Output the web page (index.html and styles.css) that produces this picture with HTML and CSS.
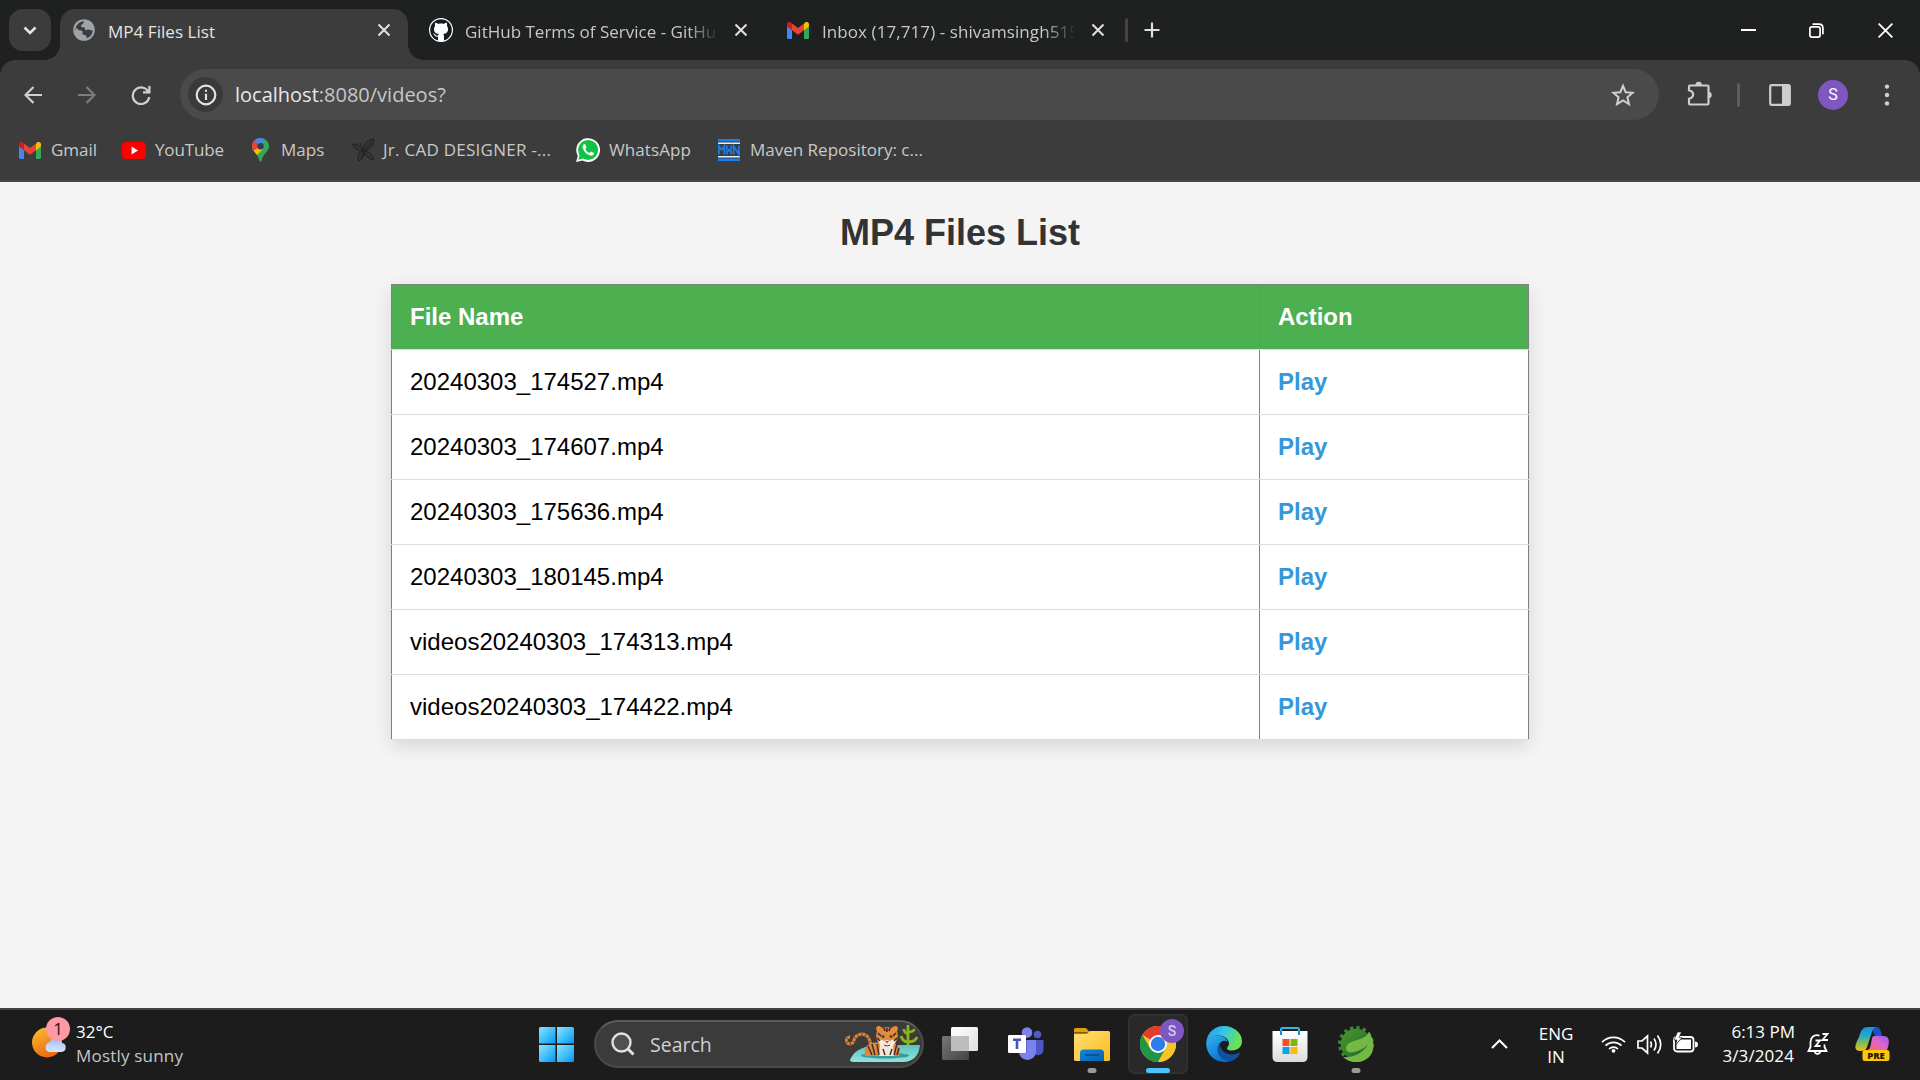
FILE: index.html
```html
<!DOCTYPE html>
<html lang="en">
<head>
<meta charset="utf-8">
<title>MP4 Files List</title>
<link rel="stylesheet" href="styles.css">
</head>
<body>
<svg width="0" height="0" class="defs">
  <defs>
    <linearGradient id="win" x1="0" y1="0" x2="1" y2="1"><stop offset="0" stop-color="#8be3ff"/><stop offset=".5" stop-color="#43c3fb"/><stop offset="1" stop-color="#0892f5"/></linearGradient>
    <linearGradient id="sun" x1="0" y1="0" x2=".5" y2="1"><stop offset="0" stop-color="#f7c031"/><stop offset="1" stop-color="#f0690f"/></linearGradient>
    <linearGradient id="cloud" x1="0" y1="0" x2="0" y2="1"><stop offset="0" stop-color="#9dbef6"/><stop offset="1" stop-color="#d8e7ff"/></linearGradient>
    <linearGradient id="folder" x1="0" y1="0" x2="1" y2="1"><stop offset="0" stop-color="#ffdf78"/><stop offset="1" stop-color="#fcba1c"/></linearGradient>
    <linearGradient id="tray" x1="0" y1="0" x2="1" y2="1"><stop offset="0" stop-color="#0f86dc"/><stop offset="1" stop-color="#0a62ad"/></linearGradient>
    <linearGradient id="edgeTop" x1="0" y1="0" x2="1" y2=".4"><stop offset="0" stop-color="#2199e4"/><stop offset=".5" stop-color="#35c6e8"/><stop offset="1" stop-color="#6be254"/></linearGradient>
    <linearGradient id="edgeLow" x1="0" y1="0" x2=".6" y2="1"><stop offset="0" stop-color="#35b3ee"/><stop offset="1" stop-color="#0a6fd0"/></linearGradient>
    <linearGradient id="bag" x1="0" y1="0" x2="0" y2="1"><stop offset="0" stop-color="#fff"/><stop offset="1" stop-color="#dcdcdc"/></linearGradient>
    <linearGradient id="viewBack" x1="0" y1="0" x2="1" y2="1"><stop offset="0" stop-color="#777"/><stop offset="1" stop-color="#444"/></linearGradient>
    <linearGradient id="viewFront" x1="0" y1="0" x2="1" y2="1"><stop offset="0" stop-color="#fff"/><stop offset="1" stop-color="#e0e0e0"/></linearGradient>
    <linearGradient id="copA" x1="0" y1="0" x2="0" y2="1"><stop offset="0" stop-color="#1a8fe8"/><stop offset=".35" stop-color="#24a8c8"/><stop offset=".7" stop-color="#8cc04a"/><stop offset="1" stop-color="#f2c020"/></linearGradient>
    <linearGradient id="copB" x1="1" y1="0" x2="0" y2="1"><stop offset="0" stop-color="#9b5cf5"/><stop offset=".5" stop-color="#e066c8"/><stop offset="1" stop-color="#ff6a5a"/></linearGradient>
    <linearGradient id="water" x1="0" y1="0" x2="0" y2="1"><stop offset="0" stop-color="#5cc3bd"/><stop offset="1" stop-color="#8fe6da"/></linearGradient>
    <linearGradient id="gear" x1="0" y1="0" x2="1" y2="1"><stop offset="0" stop-color="#4e9a2c"/><stop offset="1" stop-color="#14622a"/></linearGradient>
    <symbol id="gmail" viewBox="0 0 22 17">
      <path d="M0 4v11.4C0 16.300.7 17 1.600 17H5V7z" fill="#4285f4"/>
      <path d="M22 4v11.400c0 .9-.7 1.600-1.600 1.600H17V7z" fill="#34a853"/>
      <path d="M17 2v6.200l5-3.800V2.400C22 .2 19.600-.8 17.900.600z" fill="#fbbc04"/>
      <path d="M5 8.200V1.400l6 4.600 6-4.600v6.800l-6 4.600z" fill="#ea4335"/>
      <path d="M0 2.400v2l5 3.800V1.400L4.100.600C2.400-.8 0 .2 0 2.400z" fill="#c5221f"/>
    </symbol>
    <symbol id="cross" viewBox="0 0 14 14"><path d="M1.500 1.500l11 11M12.500 1.500l-11 11" stroke="currentColor" stroke-width="2.100"/></symbol>
  </defs>
</svg>

<header class="browser">
  <div class="tabstrip">
    <button class="tab-search"><svg width="14" height="9" viewBox="0 0 14 9"><path d="M1.500 1.500L7 7l5.500-5.500" fill="none" stroke="#e4e4e4" stroke-width="2.600"/></svg></button>
    <div class="tab active">
      <span class="favicon"><svg width="22" height="22" viewBox="0 0 22 22"><circle cx="11" cy="11" r="10.800" fill="#9da3ab"/><path d="M11.200 2.200c-1 1.300-.6 2.400-1.900 3-1.200.5-1.500 1.600-1 2.500.7 1 2.200.2 3 .9.900.9.300 2.400 1.700 2.700 1.200.3 1.300-1.300 2.600-.9 1.300.5 2.500 1.500 3.900.600.3 3.500-2.200 7.300-5.800 8.300.2-1.700-.4-3.300-2.100-3.300-1.700-.1-2.500-1.100-2.100-2.600.3-1.200-.5-1.900-1.700-2L2.300 11c.2-4.800 4-8.700 8.900-8.800z" fill="#3c3c3c"/><path d="M13 3c2.800.6 5 2.400 6 5-1.400.3-2.700-.5-3.200-1.400C15.200 5.300 13.500 5 13 3zM3 8.600l4.600 4.700c1.200.2 1.600 1 1.400 2-.3 1.400.6 2.200 1.900 2.300l.2 2.200C6 19.500 1.500 14 3 8.600z" fill="#9da3ab"/></svg></span>
      <span class="tab-title t1">MP4 Files List</span>
      <svg class="tab-close" width="14" height="14"><use href="#cross"/></svg>
    </div>
    <div class="tab">
      <span class="favicon"><svg width="24" height="24" viewBox="0 0 24 24"><circle cx="12" cy="12" r="11.400" fill="#161b22" stroke="#fff" stroke-width="1.200"/><path d="M9 23v-4.300c-2.500.4-3.300-.8-3.800-1.900-.3-.6-.9-1-1.300-1.300 1.200-.3 2 .4 2.600 1.300.6.900 1.400 1.200 2.500.8.100-.7.400-1.300.8-1.600-3-.4-4.800-1.600-4.800-5 0-1.300.4-2.300 1.100-3.100-.3-1-.3-2.200.1-3.200 1.100 0 2.200.6 3.100 1.200 1.700-.4 3.700-.4 5.400 0 .9-.6 2-1.200 3.100-1.200.4 1 .4 2.200.1 3.200.7.800 1.100 1.800 1.100 3.100 0 3.400-1.800 4.600-4.800 5 .6.500.8 1.300.8 2.400V23c-2 .9-4 .9-6 0z" fill="#fff"/></svg></span>
      <span class="tab-title t2">GitHub Terms of Service - GitHub</span>
      <svg class="tab-close" width="14" height="14"><use href="#cross"/></svg>
    </div>
    <div class="tab">
      <span class="favicon"><svg width="22" height="17"><use href="#gmail"/></svg></span>
      <span class="tab-title t3">Inbox (17,717) - shivamsingh515</span>
      <svg class="tab-close" width="14" height="14"><use href="#cross"/></svg>
    </div>
    <i class="tab-divider"></i>
    <svg class="new-tab" width="16" height="16" viewBox="0 0 16 16"><path d="M8 .5v15M.5 8h15" stroke="#dedede" stroke-width="2.200"/></svg>
    <div class="window-controls">
      <span><svg width="15" height="15" viewBox="0 0 15 15"><path d="M0 7h15" stroke="#fff" stroke-width="2"/></svg></span>
      <span><svg width="15" height="15" viewBox="0 0 15 15" fill="none" stroke="#fff" stroke-width="1.700"><rect x=".9" y="3.900" width="10.200" height="10.200" rx="2"/><path d="M3.500 1.200H10c2.500 0 3.900 1.500 3.900 3.900v6.200"/></svg></span>
      <span><svg width="15" height="15" viewBox="0 0 15 15"><path d="M.6.6l13.800 13.800M14.400.6L.6 14.400" stroke="#fff" stroke-width="1.800"/></svg></span>
    </div>
  </div>

  <div class="toolbar">
    <span class="nav"><svg width="18" height="18" viewBox="0 0 18 18" fill="none" stroke="#d0d0d0" stroke-width="2.200"><path d="M18 9H2M9.500 1L1.500 9l8 8"/></svg></span>
    <span class="nav"><svg width="18" height="18" viewBox="0 0 18 18" fill="none" stroke="#7d7d7d" stroke-width="2.200"><path d="M0 9h16M8.500 1l8 8-8 8"/></svg></span>
    <span class="nav"><svg width="20" height="20" viewBox="0 0 20 20" fill="none" stroke="#d0d0d0" stroke-width="2.200"><path d="M17.300 6.600A8.300 8.300 0 1 0 18.300 12M18.400 1v6.400H12"/></svg></span>
    <div class="omnibox">
      <span class="site-info"><svg width="22" height="22" viewBox="0 0 22 22"><circle cx="11" cy="11" r="9.300" fill="none" stroke="#e2e2e2" stroke-width="2.200"/><path d="M11 9.700v6.300M11 5.800v2" stroke="#e2e2e2" stroke-width="2.100"/></svg></span>
      <span class="url"><b>localhost</b>:8080/videos?</span>
      <svg class="star" width="24" height="24" viewBox="0 0 24 24"><path d="M12 2.800l2.700 6.400 6.900.6-5.200 4.500 1.600 6.800-6-3.600-6 3.600 1.600-6.800L2.400 9.800l6.900-.6z" fill="none" stroke="#d0d0d0" stroke-width="2"/></svg>
    </div>
    <svg class="extensions" width="25" height="25" viewBox="0 0 25 25"><path d="M2 4.500h18.500q1 0 1 1v17q0 1-1 1H3q-1 0-1-1v-4.800c5.500-1.500 5.500-7 0-8.500V5.500q0-1 1-1z" fill="none" stroke="#cdcdcd" stroke-width="2.200"/><path d="M8.500 4a3.200 3.200 0 0 1 6.400 0zM21.500 10.800a3.200 3.200 0 0 1 0 6.400z" fill="#cdcdcd"/></svg>
    <i class="tool-divider"></i>
    <svg class="panel" width="22" height="22" viewBox="0 0 22 22"><rect x="1.200" y="1.200" width="19.600" height="19.600" rx="1.500" fill="none" stroke="#cdcdcd" stroke-width="2.200"/><path d="M13 1h8v20h-8z" fill="#cdcdcd"/></svg>
    <span class="avatar">S</span>
    <svg class="more" width="6" height="22" viewBox="0 0 6 22" fill="#d0d0d0"><circle cx="3" cy="2.600" r="2.200"/><circle cx="3" cy="11" r="2.200"/><circle cx="3" cy="19.400" r="2.200"/></svg>
  </div>

  <nav class="bookmarks">
    <a><span class="bm-icon"><svg width="22" height="17"><use href="#gmail"/></svg></span><span>Gmail</span></a>
    <a><span class="bm-icon"><svg width="24" height="17" viewBox="0 0 24 17"><rect width="24" height="17" rx="4" fill="#f00"/><path d="M9.600 4.600v7.800l6.400-3.900z" fill="#fff"/></svg></span><span class="bm-youtube">YouTube</span></a>
    <a><span class="bm-icon"><svg width="17" height="24" viewBox="0 0 17 24"><clipPath id="pin"><path d="M8.500 0C3.700 0 0 3.700 0 8.300c0 5.200 5.800 7.200 7.300 13.900.3 1.900 2.100 1.900 2.400 0C11.200 15.500 17 13.500 17 8.300 17 3.700 13.300 0 8.500 0z"/></clipPath><g clip-path="url(#pin)"><path d="M0 0h17v24H0z" fill="#34a853"/><path d="M0 16L17-3V-5H0z" fill="#4285f4"/><path d="M0 0l2.500 2.500 5 5L0 15z" fill="#ea4335"/><path d="M0 11l7-6 4 6-7 7H0z" fill="#fbbc04"/><path d="M-1 3l3.300-.3L8 8 0 14z" fill="#ea4335"/></g><circle cx="8.500" cy="8.200" r="3.200" fill="#303c50"/></svg></span><span>Maps</span></a>
    <a><span class="bm-icon"><svg width="23" height="24" viewBox="0 0 23 24" fill="#343434" stroke="#222" stroke-width="1"><path d="M11 13C5 13 1.500 10 .8 6c4-.1 8 2 10.200 7zM12 13C11 7 14 2 21.500 1c1 5-3 11-9.500 12zM11 13.500C6 14 5 18 6.500 23c4-1 6-5 4.500-9.500zM12 13.500c1 4 4 7.500 9.500 8-.5-5-4-8-9.500-8z"/><path d="M9 20l10-16M8 5l6 13" fill="none"/></svg></span><span class="bm-cad">Jr. CAD DESIGNER -...</span></a>
    <a><span class="bm-icon"><svg width="24" height="24" viewBox="0 0 24 24"><path d="M0 24l1.800-6A11.900 11.900 0 1 1 6.400 22.500z" fill="#fff"/><circle cx="12.100" cy="11.900" r="10" fill="#12c144"/><path d="M2.300 21.800l1.400-5 3.500 3.700z" fill="#12c144"/><path d="M8.300 6.100c-1.800.8-2.100 2.600-1.300 4.600 1.500 3.500 4 5.900 7.600 6.900 2 .5 3.300-.8 3.400-2.600l-3-1.600-1.600 1.500c-2-.8-3.300-2.200-4.100-4l1.200-1.500-1.200-3z" fill="#fff"/></svg></span><span class="bm-whatsapp">WhatsApp</span></a>
    <a><span class="bm-icon"><svg width="22" height="22" viewBox="0 0 22 22"><path d="M0 1.300h22M0 20.700h22" stroke="#1780f0" stroke-width="2.600"/><path d="M0 4.200h22M0 17.700h22" stroke="#e9f2fb" stroke-width="1.500"/><path d="M1 15.500V7l2.700 4L6.400 7v8.500M8.800 6.500v3l2.200 2 2.200-2v-3M8.800 15.500v-3h1.400M13.200 15.500v-3h-1.400M15.600 15.500V7l5.400 8.500V7" fill="none" stroke="#1780f0" stroke-width="1.700"/></svg></span><span>Maven Repository: c...</span></a>
  </nav>
</header>

<main class="page">
  <h1>MP4 Files List</h1>
  <table>
    <colgroup><col class="col-name"><col></colgroup>
    <thead><tr><th>File Name</th><th>Action</th></tr></thead>
    <tbody>
      <tr><td>20240303_174527.mp4</td><td><a>Play</a></td></tr>
      <tr><td>20240303_174607.mp4</td><td><a>Play</a></td></tr>
      <tr><td>20240303_175636.mp4</td><td><a>Play</a></td></tr>
      <tr><td>20240303_180145.mp4</td><td><a>Play</a></td></tr>
      <tr><td>videos20240303_174313.mp4</td><td><a>Play</a></td></tr>
      <tr><td>videos20240303_174422.mp4</td><td><a>Play</a></td></tr>
    </tbody>
  </table>
</main>

<footer class="taskbar">
  <div class="weather">
    <span class="weather-icon">
      <svg width="36" height="32" viewBox="0 0 36 32"><circle cx="15" cy="15.500" r="15" fill="url(#sun)"/><path d="M17 25h12.500a4.500 4.500 0 0 0 .6-8.900 6.500 6.500 0 0 0-12.300-.8A5 5 0 0 0 17 25z" fill="url(#cloud)"/></svg>
      <b class="weather-badge">1</b>
    </span>
    <span class="weather-text"><span class="temp">32°C</span><span class="sky">Mostly sunny</span></span>
  </div>
  <svg class="start" width="35" height="35" viewBox="0 0 35 35" fill="url(#win)"><path d="M1.500 0H16.500V16.500H0V1.500Q0 0 1.500 0z"/><path d="M18 0h15.500Q35 0 35 1.500V16.500H18z"/><path d="M0 18h16.500v17h-15Q0 35 0 33.500z"/><path d="M18 18h17v15.500q0 1.500-1.500 1.500H18z"/></svg>
  <div class="search">
    <svg width="24" height="24" viewBox="0 0 24 24" fill="none" stroke="#dfe1e6"><circle cx="10.500" cy="10.500" r="9" fill="#505050" stroke-width="2.400"/><path d="M17 17l5.500 5.500" stroke-width="3"/></svg>
    <span>Search</span>
    <svg class="tiger" width="76" height="40" viewBox="0 0 76 40">
      <path d="M5 36C9 25 21 21 38 21h37c-1 10-6 17-18 17H13c-5 0-8 0-8-2z" fill="url(#water)"/>
      <ellipse cx="40" cy="31.500" rx="24" ry="3" fill="#3d99a0"/>
      <path d="M6 20C0 20 0 13 5 13M5 20q4-1 4-4c1-5 8-8 13-4q3 3 4 9" fill="none" stroke="#d9843b" stroke-width="3"/>
      <path d="M6 20C0 20 0 13 5 13M5 20q4-1 4-4c1-5 8-8 13-4q3 3 4 9" fill="none" stroke="#7a4a2c" stroke-width="3" stroke-dasharray="1 3"/>
      <path d="M20 32c-2-9 4-15 14-13h13c7 0 9 6 7 13z" fill="#dc883c"/>
      <path d="M35 20h13l1 12H34z" fill="#f4e6d6"/>
      <path d="M23 22l4 9M27 20l3 11M32 20l2 11M52 20l-3 11M54 24l-2 7M38 25l2 6M47 25l-2 6" stroke="#3c2a2c" stroke-width="1.400"/>
      <path d="M32 7c-3-4 2-7 5-3 3-1 7-1 10 0 3-4 8-1 5 3 2 6 0 12-5 15q-5 3-10 0c-5-3-7-9-5-15z" fill="#e28b3d"/>
      <path d="M33 16q3-1 6 1l3-1 3 1q3-2 6-1c-1 5-5 8-9 8s-8-3-9-8z" fill="#f7ebdf"/>
      <path d="M33 9l3 3M32 14l3 3M51 9l-3 3M52 14l-3 3M42 4v4M39 4l1 3M45 4l-1 3" stroke="#3c2a2c" stroke-width="1.600"/>
      <circle cx="38" cy="12.500" r="1.500" fill="#33502a"/><circle cx="46" cy="12.500" r="1.500" fill="#33502a"/><path d="M40 17h4l-2 2.500z" fill="#a25055"/><path d="M39 21q3 2 6 0" stroke="#51353a" fill="none"/>
      <path d="M63 21V1M63 18c-4 0-6-3-7-6M63 18c5 0 8-2 9-5M63 10c-3-1-4-3-4-5M63 8c4 0 6-1 6-3" fill="none" stroke="#86b81c" stroke-width="2.800"/>
    </svg>
  </div>
  <div class="apps">
    <span class="app"><svg width="36" height="36" viewBox="0 0 36 36"><rect x="0" y="10" width="27" height="24" rx="1.500" fill="url(#viewBack)"/><rect x="9" y="1" width="27" height="24" rx="1.500" fill="url(#viewFront)"/><path d="M9 10h18v15H10.500Q9 25 9 23.500z" fill="#bdbdbd"/></svg></span>
    <span class="app"><svg width="36" height="36" viewBox="0 0 36 36"><circle cx="29.500" cy="8.500" r="3.800" fill="#5059c9"/><path d="M26 14h9.500v9.500a5.500 5.500 0 0 1-9.500 4z" fill="#4e56c4"/><circle cx="19" cy="6.500" r="5.300" fill="#7b83eb"/><path d="M11 14h17v11.500a8.500 8.500 0 0 1-17 0z" fill="#7b83eb"/><path d="M11 14h8v12.500H10.500z" fill="#5d65ce"/><rect x="0" y="9" width="18" height="18" rx="1.200" fill="#fff"/><path d="M5 13.700h8M9 14v9" stroke="#4b53bc" stroke-width="2.600"/></svg></span>
    <span class="app running"><svg width="36" height="36" viewBox="0 0 36 36"><path d="M0 6V3.500Q0 2 1.500 2H12l4 4.500H0z" fill="#e19f0a"/><path d="M0 7.500h13l3-2.500h18.500Q36 5 36 6.500v27q0 1.500-1.500 1.500h-33Q0 35 0 33.500z" fill="url(#folder)"/><path d="M6 35V27q0-3.500 3.500-3.500h17q3.500 0 3.500 3.500v8z" fill="url(#tray)"/><path d="M11 29h14" stroke="#074f91" stroke-width="1.800"/></svg></span>
    <span class="app current"><svg width="36" height="36" viewBox="0 0 36 36"><circle cx="18" cy="18" r="18" fill="#f9c32b"/><path d="M18 18L2.400 9A18 18 0 0 1 33.600 9H18z" fill="#e23c30"/><path d="M2.400 9l7.800 13.500L18 27 18 36A18 18 0 0 1 2.400 9z" fill="#239447"/><path d="M10.200 22.500L18 27l7.800-4.500L18 36A18 18 0 0 1 8 33z" fill="#239447"/><path d="M25.800 22.500L18 36A18 18 0 0 0 33.600 9H18z" fill="#f9c32b"/><circle cx="18" cy="18" r="9" fill="#fff"/><circle cx="18" cy="18" r="7.200" fill="#2f7ded"/></svg><b class="profile-badge">S</b></span>
    <span class="app"><svg width="36" height="36" viewBox="0 0 36 36"><path d="M.3 16C1.500 6 9 0 18 0c10 0 18 7 18 15 0 6-4.500 9.500-10 9.500-4 0-6-1.300-4.500-3.200C26 16 20 9.500 12 9.500 6.500 9.500 2 12 .3 16z" fill="url(#edgeTop)"/><path d="M.3 16C2 11.500 7 9 12 9.500c5 .3 9 3 9.500 6.500-4-3-8.500 0-8.500 6 0 7 5 12 12 13C11 39-.8 29 .3 16z" fill="url(#edgeLow)"/><path d="M14 16.500c-6 7-1 19 10.500 18.700 4-1 7.500-4 9.200-7.300.4-1-.4-1.300-1.200-.8C24 31 13 26.500 14 16.500z" fill="#0d539f"/></svg></span>
    <span class="app"><svg width="36" height="36" viewBox="0 0 36 36"><path d="M9 9V3.500Q9 2 10.500 2h15Q27 2 27 3.500V9" fill="none" stroke="#35b4ee" stroke-width="2"/><path d="M.5 5h35v26q0 5-5 5h-25q-5 0-5-5z" fill="url(#bag)"/><path d="M9 9V5M27 9V5" stroke="#1590d0" stroke-width="2"/><path d="M10.500 13h7v7h-7z" fill="#f25022"/><path d="M18.500 13h7v7h-7z" fill="#7fba00"/><path d="M10.500 21h7v7h-7z" fill="#00a4ef"/><path d="M18.500 21h7v7h-7z" fill="#ffb900"/></svg></span>
    <span class="app running"><svg width="36" height="36" viewBox="0 0 36 36"><circle cx="18" cy="18" r="16" fill="none" stroke="#3d8a2d" stroke-width="4" stroke-dasharray="3.140 3.140"/><circle cx="18" cy="18" r="15.300" fill="url(#gear)"/><path d="M31 6c6 9 6 19-.5 25.500C23 38.500 11 37 5 31c9 1 20-3 25-13-4 5-9 7-14 8-5 1-7 0-8-3C8 12 26 17 31 6z" fill="#74b944"/></svg></span>
  </div>
  <div class="tray">
    <svg class="chevron" width="17" height="10" viewBox="0 0 17 10"><path d="M1 9l7.500-7.500L16 9" fill="none" stroke="#fff" stroke-width="2"/></svg>
    <span class="lang">ENG<br>IN</span>
    <svg class="wifi" width="25" height="18" viewBox="0 0 25 18" fill="none" stroke="#fff" stroke-width="1.700"><path d="M1 7.200a16 16 0 0 1 23 0M4.500 10.700a11.300 11.300 0 0 1 16 0M8 14a6.500 6.500 0 0 1 9 0"/><circle cx="12.500" cy="15.800" r="1.900" fill="#fff" stroke="none"/></svg>
    <svg class="sound" width="25" height="21" viewBox="0 0 25 21" fill="none" stroke="#fff" stroke-width="1.700"><path d="M1 7h4l5.500-5v17L5 14H1zM13.500 7.500q1.800 3 0 6M17 4.500q4 6 0 12M20.500 1.500q6.500 9 0 18"/></svg>
    <svg class="battery" width="25" height="21" viewBox="0 0 25 21"><rect x="1" y="5" width="19.500" height="14.500" rx="3" fill="none" stroke="#fff" stroke-width="1.800"/><path d="M3.500 17V12L8 7.500h10V17z" fill="#fff"/><path d="M22 9.500q3 0 3 3t-3 3z" fill="#fff"/><path d="M4.500 0L1 8h3l-1.500 5L9 5.500H6L8.500 0z" fill="#fff" stroke="#1c1c1c" stroke-width=".6"/></svg>
    <span class="clock"><span class="time">6:13 PM</span><span class="date">3/3/2024</span></span>
    <svg class="bell" width="22" height="23" viewBox="0 0 22 23" fill="none" stroke="#fff" stroke-width="1.800"><path d="M12.500 2.600C7 1 3.500 4.500 3.500 9v5L1.500 18h18l-2-4v-2.500"/><path d="M7.500 19q3 4 6 0"/><path d="M8.500 7.500h4.500l-4.500 5.500h5M15.500 1h5l-5 6h5.500"/></svg>
    <svg class="copilot" width="36" height="36" viewBox="0 0 36 36"><path d="M17 1h5c3 0 4.500 2 5 5l1 4h-7z" fill="#2050c8"/><path d="M5 11C7 4 9 1 14 1h8c-3 1-4 4-5 8l-4 12c-1 3-3 4-6 4C1 25-1 22 5 11z" fill="url(#copA)"/><path d="M20 10h9c7 0 7 6 4 14H13c2 0 3-2 4-6 1-5 1-8 3-8z" fill="url(#copB)"/><rect x="8.500" y="24" width="27" height="11" rx="2.500" fill="#ffc50a"/><text x="22" y="33" text-anchor="middle" class="pre" fill="#241c00">PRE</text></svg>
  </div>
</footer>
</body>
</html>
```
FILE: styles.css
```css
* { box-sizing: border-box; }
body {
  margin: 0;
  width: 1920px;
  height: 1080px;
  overflow: hidden;
  display: flex;
  flex-direction: column;
  background: #f4f4f4;
  font-family: "Liberation Sans", Arial, sans-serif;
}
svg { display: block; flex: none; }
.defs { position: absolute; }

.browser, .taskbar { font-family: "Open Sans", "Noto Sans", sans-serif; }
.browser {
  height: 182px;
  flex: none;
  background: #3c3c3c;
  border-bottom: 2px solid #474747;
}

/* Tab strip */
.tabstrip {
  height: 60px;
  display: flex;
  align-items: center;
  background: #1f2120;
}
.tab-search {
  width: 42px;
  height: 42px;
  margin: 0 9px;
  padding: 0;
  border: 0;
  border-radius: 14px;
  background: #3c3c3c;
  display: grid;
  place-items: center;
}
.tab {
  width: 348px;
  height: 51px;
  margin-right: 9px;
  align-self: flex-end;
  display: flex;
  align-items: center;
  padding: 0 17px 9px 12px;
  color: #c7c7c7;
}
.tab.active {
  background: #3c3c3c;
  border-radius: 15px 15px 0 0;
  color: #e3e3e3;
  position: relative;
}
.tab.active::before, .tab.active::after {
  content: "";
  position: absolute;
  bottom: 0;
  width: 15px;
  height: 15px;
}
.tab.active::before { left: -15px; background: radial-gradient(circle at 0 0, transparent 14.5px, #3c3c3c 15px); }
.tab.active::after { right: -15px; background: radial-gradient(circle at 100% 0, transparent 14.5px, #3c3c3c 15px); }
.favicon { width: 24px; display: grid; place-items: center; }
.tab-title {
  width: 252px;
  margin: 3px 0 0 12px;
  overflow: hidden;
  white-space: nowrap;
  font-size: 17px;
  line-height: 24px;
}
.t1 { letter-spacing: .05px; }
.t2, .t3 { -webkit-mask-image: linear-gradient(90deg, #000 222px, transparent 254px); mask-image: linear-gradient(90deg, #000 222px, transparent 254px); }
.t3 { letter-spacing: .08px; }
.tab-close { margin-left: auto; color: #dedede; }
.tab-divider { width: 3px; height: 24px; margin-left: -6px; border-radius: 2px; background: #444; }
.new-tab { margin-left: 16px; }
.window-controls { margin-left: auto; display: flex; }
.window-controls span { width: 69px; display: grid; place-items: center; }
.window-controls span:first-child { padding-left: 2px; }

/* Address row */
.toolbar {
  height: 69px;
  padding: 0 30px 0 6px;
  display: flex;
  align-items: center;
  background: linear-gradient(#3c3c3c, #3c3c3c) 0 15px no-repeat, radial-gradient(circle at 15px 15px, #3c3c3c 14.5px, #1f2120 15px) 0 0 / 15px 15px no-repeat, radial-gradient(circle at 0 15px, #3c3c3c 14.5px, #1f2120 15px) 100% 0 / 15px 15px no-repeat;
}
.nav { width: 54px; display: grid; place-items: center; }
.omnibox {
  width: 1479px;
  height: 51px;
  margin-left: 12px;
  padding: 0 24px 0 8px;
  border-radius: 26px;
  background: #4a4a4a;
  display: flex;
  align-items: center;
}
.site-info { width: 35px; height: 35px; border-radius: 50%; background: #3a3a3a; display: grid; place-items: center; }
.url { margin-left: 12px; font-size: 20px; line-height: 28px; color: #c7c7c7; }
.url b { font-weight: 400; color: #e8e8e8; }
.star { margin-left: auto; }
.extensions { margin: -3px 0 0 28px; }
.tool-divider { width: 3px; height: 24px; margin-left: 25px; border-radius: 2px; background: #5d5d5d; }
.panel { margin-left: 29px; }
.avatar {
  width: 30px;
  height: 30px;
  margin-left: 27px;
  border-radius: 50%;
  background: #7e57c2;
  color: #fff;
  font: 16px/30px Roboto, sans-serif;
  text-align: center;
}
.more { margin-left: auto; }

.bookmarks {
  height: 42px;
  padding-left: 18px;
  display: grid;
  grid-template-columns: 104px 126px 103px 225px 141px 240px;
  align-items: center;
  color: #c9c9c9;
  font-size: 17px;
}
.bookmarks a { display: flex; align-items: center; gap: 9px; white-space: nowrap; line-height: 24px; }
.bm-icon { width: 24px; display: grid; place-items: center; }
.bm-youtube { letter-spacing: -.15px; }
.bm-cad { margin-left: -1px; letter-spacing: .26px; }
.bm-whatsapp { letter-spacing: .1px; }

/* Page content */
.page { height: 826px; flex: none; }
h1 {
  margin: 30px 0 31px;
  font-size: 36px;
  line-height: 41px;
  text-align: center;
  color: #333;
}
table {
  width: 1138px;
  margin: 0 0 0 391px;
  table-layout: fixed;
  border-collapse: collapse;
  border: 1px solid #808080;
  border-bottom: 0;
  background: #fff;
  box-shadow: 0 6px 18px rgba(0, 0, 0, .12);
  font-size: 24px;
}
.col-name { width: 868px; }
th, td {
  height: 65px;
  padding: 0 18px;
  text-align: left;
  border: 1px solid #808080;
  border-bottom-color: #ddd;
}
tbody td { border-top-color: #ddd; }
th { background: #4caf50; color: #fff; }
td a { color: #3498db; font-weight: 700; }

/* Taskbar */
.taskbar {
  height: 72px;
  flex: none;
  padding-bottom: 2px;
  border-top: 2px solid #424242;
  background: #1c1c1c;
  color: #fff;
  display: flex;
  align-items: center;
  font-size: 17px;
}
.weather { width: 507px; margin-left: 32px; display: flex; }
.weather-icon { width: 44px; height: 48px; padding-top: 7px; position: relative; }
.weather-badge {
  position: absolute;
  left: 14px;
  top: -3px;
  width: 24px;
  height: 24px;
  border-radius: 50%;
  background: #ff99a4;
  color: #1a1a1a;
  font-weight: 400;
  line-height: 23px;
  text-align: center;
}
.weather-text { display: flex; flex-direction: column; line-height: 24px; }
.sky { color: #c6c6c6; letter-spacing: .2px; }
.search {
  width: 330px;
  height: 48px;
  margin-left: 20px;
  padding: 0 1px 0 15px;
  border: 2px solid #4a4a4a;
  border-top-color: #5b5b5b;
  border-radius: 24px;
  background: #3b3b3b;
  display: flex;
  align-items: center;
  gap: 15px;
  color: #d0d0d0;
  font-size: 19.5px;
}
.tiger { margin-left: auto; }
.apps { margin-left: 6px; display: flex; }
.app { width: 60px; height: 60px; margin-right: 6px; display: grid; place-items: center; position: relative; }
.running::after, .current::after {
  content: "";
  position: absolute;
  left: 50%;
  bottom: 1px;
  width: 9px;
  height: 5px;
  border-radius: 3px;
  background: #999;
  transform: translateX(-50%);
}
.current { border-radius: 7px; background: #292929; box-shadow: inset 0 0 0 1.5px #333; }
.current::after { width: 24px; background: #4cc2ff; }
.profile-badge {
  position: absolute;
  top: 5px;
  right: 4px;
  width: 24px;
  height: 24px;
  border-radius: 50%;
  background: #7e57c2;
  color: #d8cdec;
  font: 500 14px/24px Roboto, sans-serif;
  text-align: center;
}
.tray { margin-left: auto; width: 429px; height: 60px; display: flex; align-items: center; }
.lang { width: 50px; margin: 2px 0 0 23px; text-align: center; line-height: 23px; }
.wifi { margin-left: 20px; }
.sound, .battery { margin-left: 11px; }
.battery { margin-top: -3px; }
.clock { width: 97px; display: flex; flex-direction: column; align-items: flex-end; line-height: 24px; }
.date { margin-right: 1px; letter-spacing: .1px; }
.bell { margin-left: 12px; }
.copilot { margin-left: 25px; }
.pre { font: 800 9.5px "Open Sans", sans-serif; }
```
